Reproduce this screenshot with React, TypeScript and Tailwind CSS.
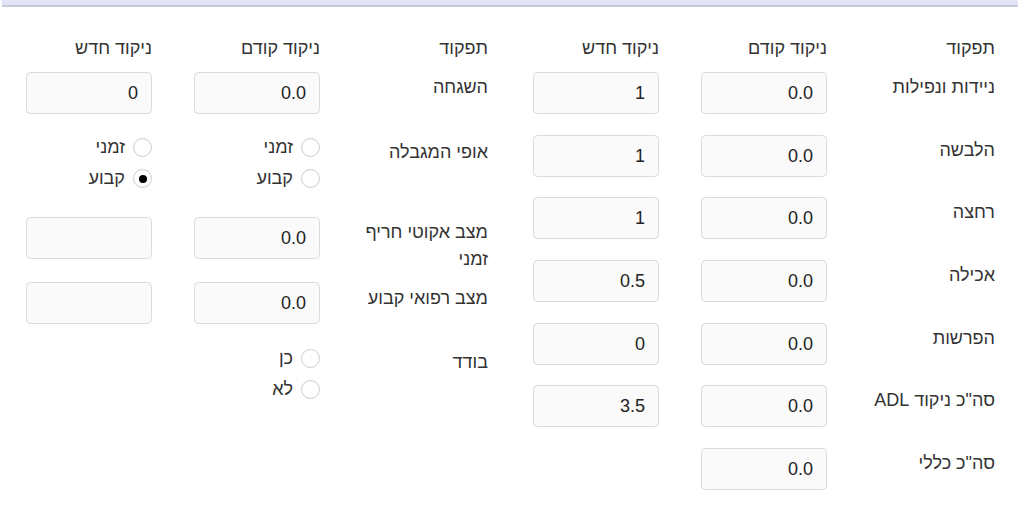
import React from "react";

const font = { fontFamily: '"Liberation Sans", Arial, "DejaVu Sans", sans-serif' };

function Field({ value }: { value?: string }) {
  return (
    <div className="w-[126px] h-[42px] rounded-[4.5px] border border-[#dadada] bg-[#fafafa] px-[13px] text-right text-[18px] leading-[41px] text-[#222]">
      {value}
    </div>
  );
}

function Radio({ text, checked }: { text: string; checked?: boolean }) {
  return (
    <div className="flex items-center gap-[8px] h-[31px]">
      <span className="w-[19px] h-[19px] rounded-full border border-[#cdcdcd] bg-white flex items-center justify-center">
        {checked && <span className="w-[8px] h-[8px] rounded-full bg-black" />}
      </span>
      <span className="text-[18px] leading-[27px] text-[#333]">{text}</span>
    </div>
  );
}

function Label({ children, pt = "pt-[2px]" }: { children: React.ReactNode; pt?: string }) {
  return <div className={`w-[126px] text-right text-[18px] leading-[27px] text-[#333] ${pt}`}>{children}</div>;
}

function Header() {
  return (
    <div className="flex gap-[42px] text-[18px] leading-[27px] text-[#333]">
      <div className="w-[126px]">תפקוד</div>
      <div className="w-[126px]">ניקוד קודם</div>
      <div className="w-[126px]">ניקוד חדש</div>
    </div>
  );
}

const rightRows: [string, string, string?][] = [
  ["ניידות ונפילות", "0.0", "1"],
  ["הלבשה", "0.0", "1"],
  ["רחצה", "0.0", "1"],
  ["אכילה", "0.0", "0.5"],
  ["הפרשות", "0.0", "0"],
  ["סה\"כ ניקוד ADL", "0.0", "3.5"],
  ["סה\"כ כללי", "0.0"],
];

export default function App() {
  return (
    <div className="w-[1024px] h-[508px] bg-white overflow-hidden" style={font}>
      <div className="ml-[2px] w-[1016px] h-[7px] bg-[#e4e4f8] border-b-2 border-[#c9c9da]" />
      <div dir="rtl" className="ml-[2px] w-[1016px] flex gap-[45px] pr-[23px] pt-[28px]">
        {/* right group */}
        <div className="w-[462px] flex flex-col">
          <Header />
          <div className="mt-[10px] flex flex-col gap-[20.7px]">
            {rightRows.map(([label, prev, next]) => (
              <div key={label} className="flex gap-[42px] h-[42px]">
                <Label>{label}</Label>
                <Field value={prev} />
                {next !== undefined ? <Field value={next} /> : <div className="w-[126px]" />}
              </div>
            ))}
          </div>
        </div>

        {/* left group */}
        <div className="w-[462px] flex flex-col">
          <Header />
          <div className="mt-[10px] flex gap-[42px] h-[42px]">
            <Label>השגחה</Label>
            <Field value="0.0" />
            <Field value="0" />
          </div>
          <div className="mt-[18px] flex gap-[42px]">
            <Label pt="pt-[7px]">אופי המגבלה</Label>
            <div className="w-[126px]">
              <Radio text="זמני" />
              <Radio text="קבוע" />
            </div>
            <div className="w-[126px]">
              <Radio text="זמני" />
              <Radio text="קבוע" checked />
            </div>
          </div>
          <div className="mt-[23px] flex gap-[42px] h-[65px]">
            <Label>מצב אקוטי חריף זמני</Label>
            <Field value="0.0" />
            <Field />
          </div>
          <div className="flex gap-[42px] h-[42px]">
            <Label pt="pt-[3px]">מצב רפואי קבוע</Label>
            <Field value="0.0" />
            <Field />
          </div>
          <div className="mt-[19px] flex gap-[42px]">
            <Label pt="pt-[6px]">בודד</Label>
            <div className="w-[126px]">
              <Radio text="כן" />
              <Radio text="לא" />
            </div>
            <div className="w-[126px]" />
          </div>
        </div>
      </div>
    </div>
  );
}
